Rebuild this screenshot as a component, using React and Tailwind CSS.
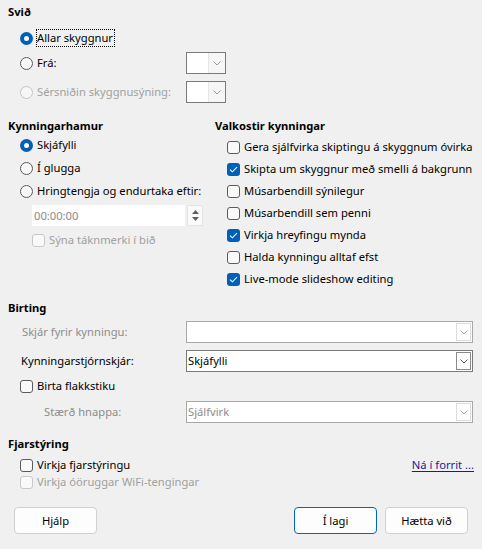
const Radio = ({ checked, disabled }) => {
  if (checked) {
    return (
      <span className="w-[13px] h-[13px] rounded-full bg-[#005fb8] flex items-center justify-center shrink-0">
        <span className="w-[5px] h-[5px] rounded-full bg-white" />
      </span>
    );
  }
  return (
    <span
      className={
        "w-[13px] h-[13px] rounded-full border shrink-0 bg-[#f7f7f7] " +
        (disabled ? "border-[#c4c4c4]" : "border-[#5b5b5b]")
      }
    />
  );
};

const Check = ({ checked, disabled }) => {
  if (checked) {
    return (
      <span className="w-[13px] h-[13px] rounded-[3px] bg-[#005fb8] flex items-center justify-center shrink-0">
        <svg width="9" height="7" viewBox="0 0 9 7">
          <path d="M1 3.6 L3.4 5.8 L8 1.2" fill="none" stroke="white" strokeWidth="1.1" />
        </svg>
      </span>
    );
  }
  return (
    <span
      className={
        "w-[13px] h-[13px] rounded-[3px] border shrink-0 bg-[#f9f9f9] " +
        (disabled ? "border-[#c8c8c8]" : "border-[#5b5b5b]")
      }
    />
  );
};

const Chevron = ({ color = "#6a6a6a" }) => (
  <svg width="8" height="5" viewBox="0 0 8 5">
    <path d="M0.5 0.5 L4 4 L7.5 0.5" fill="none" stroke={color} strokeWidth="1" />
  </svg>
);

const SmallCombo = () => (
  <div className="w-[40px] h-[22px] border border-[#7a7a7a] bg-white flex justify-end">
    <div className="w-[17px] h-full bg-[#f6f6f6] border-l border-[#e6e6e6] flex items-center justify-center">
      <Chevron color="#9a9a9a" />
    </div>
  </div>
);

const WideCombo = ({ value, disabled, active }) => (
  <div
    className={
      "w-[287px] h-[22px] border bg-white flex items-center justify-between pl-[1px] pr-[1px] " +
      (disabled ? "border-[#a8a8a8]" : "border-[#7a7a7a]")
    }
  >
    <span className={disabled ? "text-[#8c8c8c]" : "text-black"}>{value}</span>
    <div
      className={
        "w-[15px] h-[18px] border flex items-center justify-center " +
        (active ? "border-[#8a8a8a]" : "border-[#dcdcdc]")
      }
    >
      <Chevron color={active ? "#555555" : "#a8a8a8"} />
    </div>
  </div>
);

const Btn = ({ children, primary, className = "" }) => (
  <button
    className={
      "w-[83px] h-[27px] rounded-[4px] bg-[#fdfdfd] flex items-center justify-center border " +
      (primary ? "border-[#0067c0]" : "border-[#d0d0d0]") +
      " " +
      className
    }
  >
    {children}
  </button>
);

const options = [
  ["Gera sjálfvirka skiptingu á skyggnum óvirka", false],
  ["Skipta um skyggnur með smelli á bakgrunn", true],
  ["Músarbendill sýnilegur", false],
  ["Músarbendill sem penni", false],
  ["Virkja hreyfingu mynda", true],
  ["Halda kynningu alltaf efst", false],
  ["Live-mode slideshow editing", true],
];

export default function App() {
  return (
    <div className="w-[482px] h-[549px] bg-[#f0f0f0] text-black text-[11.2px] leading-[16px] font-['Noto_Sans',sans-serif] pl-2 pt-1 overflow-hidden whitespace-nowrap">
      {/* Svið */}
      <div className="h-4 font-bold flex items-center">Svið</div>
      <div className="mt-2 h-5 flex items-center pl-3 gap-[3px]">
        <Radio checked />
        <span className="border border-dotted border-black h-[18px] flex items-center pr-[1px]">Allar skyggnur</span>
      </div>
      <div className="mt-1 h-[22px] flex items-center">
        <div className="w-[178px] pl-3 flex items-center gap-1">
          <Radio />
          <span>Frá:</span>
        </div>
        <SmallCombo />
      </div>
      <div className="mt-[7px] h-[22px] flex items-center">
        <div className="w-[178px] pl-3 flex items-center gap-1 text-[#a0a0a0]">
          <Radio disabled />
          <span>Sérsniðin skyggnusýning:</span>
        </div>
        <SmallCombo />
      </div>

      {/* Two columns */}
      <div className="mt-[15px] flex">
        <div className="w-[207px]">
          <div className="h-4 font-bold flex items-center">Kynningarhamur</div>
          <div className="mt-[1px] h-5 flex items-center pl-3 gap-1">
            <Radio checked />
            <span>Skjáfylli</span>
          </div>
          <div className="mt-[3px] h-5 flex items-center pl-3 gap-1">
            <Radio />
            <span>Í glugga</span>
          </div>
          <div className="mt-[3px] h-5 flex items-center pl-3 gap-1">
            <Radio />
            <span>Hringtengja og endurtaka eftir:</span>
          </div>
          <div className="mt-1 ml-6 h-[21px] flex">
            <div className="w-[153px] h-full bg-white flex items-center pl-[2px] text-[#8a8a8a]">00:00:00</div>
            <div className="ml-[2px] w-[16px] h-full bg-[#fafafa] border border-[#e4e4e4] flex flex-col items-center justify-center gap-[3px]">
              <svg width="7" height="4" viewBox="0 0 7 4">
                <path d="M0 4 L3.5 0 L7 4 Z" fill="#606060" />
              </svg>
              <svg width="7" height="4" viewBox="0 0 7 4">
                <path d="M0 0 L3.5 4 L7 0 Z" fill="#606060" />
              </svg>
            </div>
          </div>
          <div className="mt-[5px] ml-6 h-[18px] flex items-center gap-1 text-[#a0a0a0]">
            <Check disabled />
            <span>Sýna táknmerki í bið</span>
          </div>
        </div>
        <div>
          <div className="h-4 font-bold flex items-center">Valkostir kynningar</div>
          <div className="mt-[2px]">
            {options.map(([label, on]) => (
              <div key={label} className="h-[22px] flex items-center pl-3 gap-1">
                <Check checked={on} />
                <span>{label}</span>
              </div>
            ))}
          </div>
        </div>
      </div>

      {/* Birting */}
      <div className="mt-[10px] h-4 font-bold flex items-center">Birting</div>
      <div className="mt-[5px] h-[22px] flex items-center">
        <div className="w-[178px] pl-[14px] text-[#8c8c8c]">Skjár fyrir kynningu:</div>
        <WideCombo value="" disabled />
      </div>
      <div className="mt-[7px] h-[22px] flex items-center">
        <div className="w-[178px] pl-[13px]">Kynningarstjórnskjár:</div>
        <WideCombo value="Skjáfylli" active />
      </div>
      <div className="mt-[5px] h-[18px] flex items-center pl-3 gap-1">
        <Check />
        <span>Birta flakkstiku</span>
      </div>
      <div className="mt-[6px] h-[22px] flex items-center">
        <div className="w-[178px] pl-9 text-[#8c8c8c]">Stærð hnappa:</div>
        <WideCombo value="Sjálfvirk" disabled />
      </div>

      {/* Fjarstýring */}
      <div className="mt-[13px] h-4 font-bold flex items-center">Fjarstýring</div>
      <div className="mt-1 h-[18px] flex items-center pl-3 pr-2">
        <Check />
        <span className="ml-1">Virkja fjarstýringu</span>
        <a className="ml-auto text-[#1a1aa0] underline underline-offset-2">Ná í forrit ...</a>
      </div>
      <div className="h-4 flex items-center pl-3 gap-1 text-[#a0a0a0]">
        <Check disabled />
        <span>Virkja óöruggar WiFi-tengingar</span>
      </div>

      {/* Buttons */}
      <div className="mt-[17px] -ml-2 w-[482px] px-[14px] flex items-center">
        <Btn>Hjálp</Btn>
        <Btn primary className="ml-auto">Í lagi</Btn>
        <Btn className="ml-2">Hætta við</Btn>
      </div>
    </div>
  );
}
